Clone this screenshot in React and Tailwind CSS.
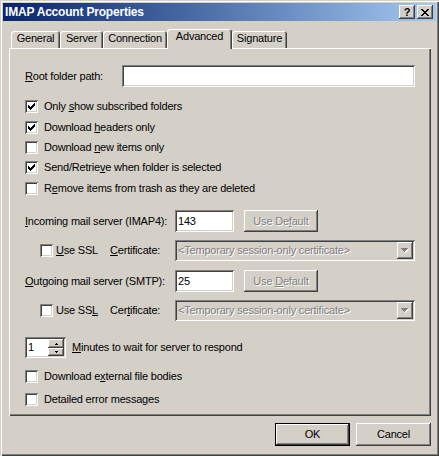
import React from 'react'

const raised =
  'shadow-[inset_-1px_-1px_0_#404040,inset_1px_1px_0_#ffffff,inset_-2px_-2px_0_#808080]'
const sunken =
  'shadow-[inset_1px_1px_0_#808080,inset_-1px_-1px_0_#ffffff,inset_2px_2px_0_#404040,inset_-2px_-2px_0_#d4d0c8]'
const grayText = 'text-[#808080] [text-shadow:1px_1px_0_#ffffff]'

function U({ children }) {
  return <span className="underline underline-offset-[1px]">{children}</span>
}

function CheckBox({ checked }) {
  return (
    <div className={`relative w-[13px] h-[13px] shrink-0 bg-white ${sunken}`}>
      {checked && (
        <svg
          className="absolute left-[3px] top-[3px]"
          width="7"
          height="7"
          viewBox="0 0 7 7"
          shapeRendering="crispEdges"
        >
          <path
            fill="#000"
            d="M6 0h1v1H6zM5 1h2v1H5zM0 2h1v1H0zM4 2h3v1H4zM0 3h2v1H0zM3 3h3v1H3zM0 4h5v1H0zM1 5h3v1H1zM2 6h1v1H2z"
          />
        </svg>
      )}
    </div>
  )
}

function CheckRow({ checked, children, className = '' }) {
  return (
    <div className={`flex items-center h-[13px] gap-[6px] ${className}`}>
      <CheckBox checked={checked} />
      <span>{children}</span>
    </div>
  )
}

function TextField({ value, className = '' }) {
  return (
    <div className={`h-[22px] bg-white flex items-center pl-[3px] ${sunken} ${className}`}>
      {value}
    </div>
  )
}

function DisabledButton({ children }) {
  return (
    <div
      className={`w-[74px] h-[22px] ml-[10px] flex items-center justify-center ${raised} ${grayText}`}
    >
      <span>{children}</span>
    </div>
  )
}

function Combo() {
  return (
    <div className={`flex-1 h-[21px] flex items-center p-[2px] ${sunken}`}>
      <span className={`flex-1 pl-[1px] ${grayText}`}>
        &lt;Temporary session-only certificate&gt;
      </span>
      <div className={`w-[16px] h-[17px] flex items-center justify-center ${raised}`}>
        <svg width="8" height="5" viewBox="0 0 8 5" shapeRendering="crispEdges">
          <path fill="#fff" d="M1 1h7v1H1zM2 2h5v1H2zM3 3h3v1H3zM4 4h1v1H4z" />
          <path fill="#808080" d="M0 0h7v1H0zM1 1h5v1H1zM2 2h3v1H2zM3 3h1v1H3z" />
        </svg>
      </div>
    </div>
  )
}

function SslRow({ useKey, certKey }) {
  return (
    <div className="flex items-center h-[21px]">
      <div className="w-[150px] flex items-center pl-[15px]">
        <CheckBox />
        <span className="ml-[3px] w-[54px]">{useKey}</span>
        <span>{certKey}</span>
      </div>
      <Combo />
    </div>
  )
}

function Tab({ label, selected, width }) {
  if (selected) {
    return (
      <div
        className={`relative z-10 h-[20px] -mb-px bg-[#d4d0c8] rounded-t-[3px] flex justify-center pt-[2px] shadow-[inset_1px_1px_0_#ffffff,inset_-1px_0_0_#404040,inset_-2px_0_0_#808080] ${width}`}
      >
        {label}
      </div>
    )
  }
  return (
    <div
      className={`h-[17px] rounded-t-[3px] flex justify-center pt-[2px] shadow-[inset_1px_1px_0_#ffffff,inset_-1px_0_0_#404040,inset_-2px_0_0_#808080] ${width}`}
    >
      {label}
    </div>
  )
}

export default function App() {
  return (
    <div className="w-[439px] h-[456px] bg-[#d4d0c8] p-[3px] flex flex-col font-['Liberation_Sans',Arial,sans-serif] text-[11px] tracking-[-0.2px] leading-none text-black shadow-[inset_1px_1px_0_#d4d0c8,inset_2px_2px_0_#ffffff,inset_-1px_-1px_0_#404040,inset_-2px_-2px_0_#808080]">
      {/* title bar */}
      <div className="h-[18px] flex items-center justify-between bg-gradient-to-r from-[#0a246a] to-[#a6caf0] pl-[2px] pr-[3px]">
        <span className="text-white font-bold text-[12px] tracking-[-0.2px]">
          IMAP Account Properties
        </span>
        <div className="flex gap-[2px]">
          <div
            className={`w-[16px] h-[14px] bg-[#d4d0c8] flex items-center justify-center font-bold text-[11px] tracking-normal ${raised}`}
          >
            ?
          </div>
          <div
            className={`w-[16px] h-[14px] bg-[#d4d0c8] flex items-center justify-center ${raised}`}
          >
            <svg width="8" height="7" viewBox="0 0 8 7" shapeRendering="crispEdges">
              <path
                fill="#000"
                d="M0 0h2v1H0zM6 0h2v1H6zM1 1h2v1H1zM5 1h2v1H5zM2 2h4v1H2zM3 3h2v1H3zM2 4h4v1H2zM1 5h2v1H1zM5 5h2v1H5zM0 6h2v1H0zM6 6h2v1H6z"
              />
            </svg>
          </div>
        </div>
      </div>

      <div className="flex flex-col pl-[6px] pr-[5px]">
        {/* tabs */}
        <div className="mt-[8px] h-[19px] flex items-end pl-[2px]">
          <Tab label="General" width="w-[49px]" />
          <Tab label="Server" width="w-[43px]" />
          <Tab label="Connection" width="w-[64px]" />
          <Tab label="Advanced" width="w-[65px]" selected />
          <Tab label="Signature" width="w-[55px]" />
        </div>

        {/* panel */}
        <div className="h-[368px] flex flex-col px-[16px] pt-[17px] shadow-[inset_1px_1px_0_#ffffff,inset_-1px_-1px_0_#404040,inset_-2px_-2px_0_#808080]">
          <div className="flex items-center h-[22px]">
            <span className="w-[97px]">
              <U>R</U>oot folder path:
            </span>
            <TextField className="flex-1" />
          </div>

          <CheckRow checked className="mt-[13px]">
            Only <U>s</U>how subscribed folders
          </CheckRow>
          <CheckRow checked className="mt-[8px]">
            Download <U>h</U>eaders only
          </CheckRow>
          <CheckRow className="mt-[7px]">
            Download <U>n</U>ew items only
          </CheckRow>
          <CheckRow checked className="mt-[7px]">
            Send/Retrie<U>v</U>e when folder is selected
          </CheckRow>
          <CheckRow className="mt-[8px]">
            R<U>e</U>move items from trash as they are deleted
          </CheckRow>

          <div className="flex items-center h-[22px] mt-[15px]">
            <span className="w-[150px]">
              <U>I</U>ncoming mail server (IMAP4):
            </span>
            <TextField value="143" className="w-[59px]" />
            <DisabledButton>
              Use De<U>f</U>ault
            </DisabledButton>
          </div>
          <div className="mt-[8px]">
            <SslRow
              useKey={
                <>
                  <U>U</U>se SSL
                </>
              }
              certKey={
                <>
                  <U>C</U>ertificate:
                </>
              }
            />
          </div>

          <div className="flex items-center h-[22px] mt-[9px]">
            <span className="w-[150px]">
              <U>O</U>utgoing mail server (SMTP):
            </span>
            <TextField value="25" className="w-[59px]" />
            <DisabledButton>
              Use <U>D</U>efault
            </DisabledButton>
          </div>
          <div className="mt-[8px]">
            <SslRow
              useKey={
                <>
                  Use SS<U>L</U>
                </>
              }
              certKey={
                <>
                  Cer<U>t</U>ificate:
                </>
              }
            />
          </div>

          <div className="flex items-center h-[21px] mt-[16px]">
            <div className={`w-[41px] h-[21px] bg-white flex p-[2px] ${sunken}`}>
              <span className="flex-1 pl-[1px] flex items-center">1</span>
              <div className="w-[16px] flex flex-col">
                <div className={`h-[9px] bg-[#d4d0c8] flex items-center justify-center ${raised}`}>
                  <svg width="3" height="2" viewBox="0 0 3 2" shapeRendering="crispEdges">
                    <path fill="#000" d="M1 0h1v1H1zM0 1h3v1H0z" />
                  </svg>
                </div>
                <div className={`h-[8px] bg-[#d4d0c8] flex items-center justify-center ${raised}`}>
                  <svg width="3" height="2" viewBox="0 0 3 2" shapeRendering="crispEdges">
                    <path fill="#000" d="M0 0h3v1H0zM1 1h1v1H1z" />
                  </svg>
                </div>
              </div>
            </div>
            <span className="ml-[6px]">
              <U>M</U>inutes to wait for server to respond
            </span>
          </div>

          <CheckRow className="mt-[12px]">
            Download e<U>x</U>ternal file bodies
          </CheckRow>
          <CheckRow className="mt-[10px]">
            Detailed error messa<U>g</U>es
          </CheckRow>
        </div>
      </div>

      {/* buttons */}
      <div className="mt-[7px] flex justify-end gap-[6px] pr-[5px]">
        <div className="w-[75px] h-[23px] flex items-center justify-center border border-black shadow-[inset_-1px_-1px_0_#404040,inset_1px_1px_0_#ffffff,inset_-2px_-2px_0_#808080]">
          OK
        </div>
        <div className={`w-[75px] h-[23px] flex items-center justify-center ${raised}`}>
          Cancel
        </div>
      </div>
    </div>
  )
}
